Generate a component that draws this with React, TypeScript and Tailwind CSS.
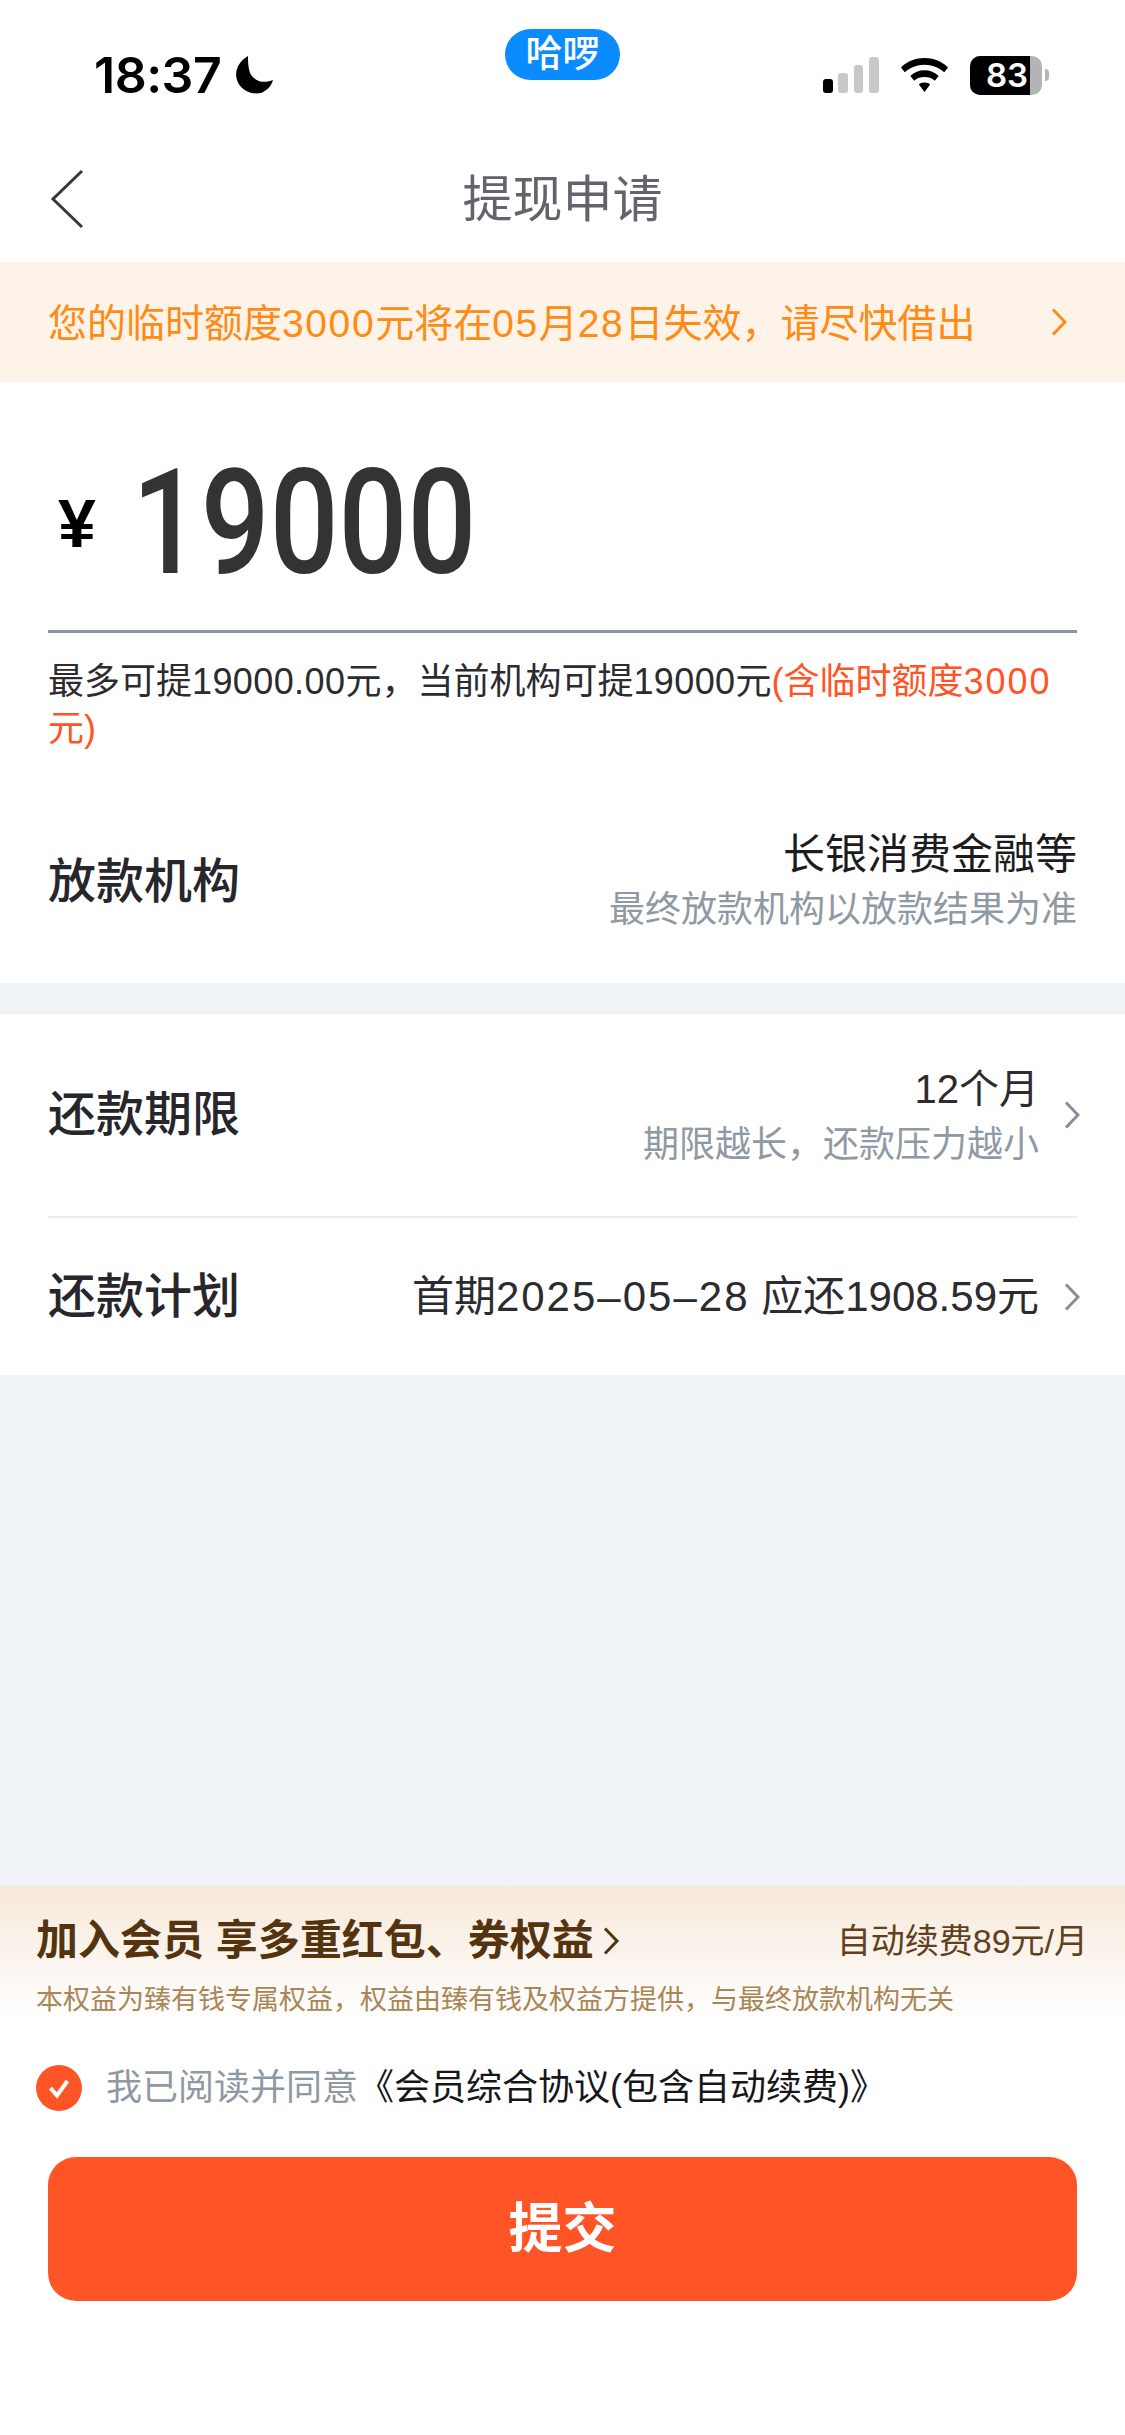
import React from "react";

const Chevron = ({ className }: { className: string }) => (
  <svg className={className} viewBox="0 0 16 28" fill="none">
    <path d="M2 1.5l12 12.5L2 26.5" stroke="currentColor" strokeWidth="3" />
  </svg>
);

function StatusBar() {
  return (
    <div className="relative flex h-[110px] items-center justify-between pl-[94px] pr-[76px] pt-[40px]">
      <div className="flex items-center gap-[14px]">
        <span className="font-['Inter',sans-serif] text-[50px] leading-none font-semibold tracking-[-0.5px] text-black">18:37</span>
        <svg className="h-[38px] w-[38px]" viewBox="0 0 38 38">
          <path d="M13 0C4 5-1 15 2 24c3 10 14 15 24 13 5-2 10-6 12-13-10 4-19 1-23-7-2-6-2-12-2-17z" fill="#000" />
        </svg>
      </div>
      <div className="absolute left-[505px] top-[29px] flex h-[51px] w-[115px] items-center justify-center rounded-full bg-[#0a8cff] text-[37px] leading-none font-medium text-white">
        哈啰
      </div>
      <div className="flex items-center">
        <svg className="h-[36px] w-[56px]" viewBox="0 0 56 36">
          <rect x="0" y="22" width="10" height="14" rx="3" fill="#000" />
          <rect x="15" y="16" width="10" height="20" rx="3" fill="#c8c8c8" />
          <rect x="31" y="8" width="9" height="28" rx="3" fill="#c8c8c8" />
          <rect x="46" y="0" width="10" height="36" rx="3" fill="#c8c8c8" />
        </svg>
        <svg className="ml-[22px] h-[36px] w-[47px]" viewBox="0 0 50 36">
          <path d="M25 0c9 0 18 3 25 10l-4 5c-6-5-13-8-21-8S10 10 4 15L0 10C7 3 16 0 25 0z" fill="#000" />
          <path d="M25 13c6 0 11 2 15 6l-4 5c-3-3-7-4-11-4s-8 1-11 4l-4-5c4-4 9-6 15-6z" fill="#000" />
          <path d="M25 26c3 0 5 1 6 2l-6 8-6-8c1-1 3-2 6-2z" fill="#000" />
        </svg>
        <div className="ml-[22px] flex items-center">
          <div className="flex h-[39px] w-[72px] rounded-[10px] bg-[#b4b4b4]">
            <div className="flex h-full w-[60px] items-center justify-end rounded-l-[10px] bg-black pr-[2px] font-['Inter',sans-serif] text-[33px] leading-none font-semibold text-white">
              83
            </div>
          </div>
          <div className="ml-[3px] h-[12px] w-[4px] rounded-r-full bg-[#b4b4b4]" />
        </div>
      </div>
    </div>
  );
}

function Row({ title, height, children, chevron }: { title: string; height: string; children: React.ReactNode; chevron?: boolean }) {
  return (
    <div className={`flex items-center justify-between ${height}`}>
      <span className="text-[48px] leading-none font-medium text-[#26262b]">{title}</span>
      <div className="flex items-center">
        <div className="text-right">{children}</div>
        {chevron && <Chevron className="ml-[25px] -mr-[3px] h-[28px] w-[16px] text-[#858f99]" />}
      </div>
    </div>
  );
}

export default function App() {
  return (
    <div lang="zh-CN" className="flex h-[2435px] w-[1125px] flex-col bg-white font-['Liberation_Sans','Noto_Sans_CJK_SC',sans-serif]">
      <StatusBar />

      <div className="relative flex h-[152px] items-center justify-center pt-[28px]">
        <svg className="absolute left-[50px] top-[59px] h-[60px] w-[34px]" viewBox="0 0 34 60" fill="none">
          <path d="M32 2L3 30l29 28" stroke="#3b3733" strokeWidth="3" />
        </svg>
        <span className="text-[50px] leading-none text-[#63636e]">提现申请</span>
      </div>

      <div className="flex h-[120px] items-center justify-between bg-[#fdf3e8] pl-[48px] pr-[58px]">
        <span className="pt-[3px] text-[39px] leading-none text-[#ff8a14]">
          您的临时额度<span className="tracking-[1.6px]">3000</span>元将在<span className="tracking-[1.6px]">05</span>月<span className="tracking-[1.6px]">28</span>日失效，请尽快借出
        </span>
        <Chevron className="h-[28px] w-[16px] text-[#ff8a14]" />
      </div>

      <div className="px-[48px]">
        <div className="flex h-[251px] items-center border-b-[3px] border-[#8a949e] pt-[36px]">
          <span className="ml-[10px] -mt-[2px] text-[68px] leading-none font-bold text-black">¥</span>
          <span className="ml-[36px] inline-block origin-left scale-x-[0.83] font-['Roboto',sans-serif] text-[146px] leading-none font-medium text-[#333336]">19000</span>
        </div>
        <p className="pt-[25px] text-[36px] leading-[47px] text-[#2b2b30]">
          最多可提<span className="tracking-[0.4px]">19000.00</span>元，当前机构可提<span className="tracking-[0.4px]">19000</span>元<span className="text-[#ff5526]">(含临时额度<span className="tracking-[2px]">3000</span>元)</span>
        </p>
        <div className="mt-[28px]">
          <Row title="放款机构" height="h-[203px]">
            <div className="text-[42px] leading-[53px] text-[#1c1c20]">长银消费金融等</div>
            <div className="pt-[2px] text-[36px] leading-[53px] text-[#8f99a3]">最终放款机构以放款结果为准</div>
          </Row>
        </div>
      </div>

      <div className="h-[31px] bg-[#eff3f6]" />

      <div className="px-[48px]">
        <div className="border-b-2 border-[#ececf2]">
          <Row title="还款期限" height="h-[202px]" chevron>
            <div className="pt-[3px] text-[40px] leading-[55px] text-[#2b2b30]">12个月</div>
            <div className="text-[36px] leading-[55px] text-[#8f99a3]">期限越长，还款压力越小</div>
          </Row>
        </div>
        <Row title="还款计划" height="h-[157px]" chevron>
          <div className="text-[42px] leading-none text-[#2b2b30]">
            首期<span className="tracking-[2px]">2025–05–28</span> 应还1908.59元
          </div>
        </Row>
      </div>

      <div className="flex-1 bg-[#eff3f6]" />

      <div className="flex h-[134px] flex-col bg-gradient-to-b from-[#f6e8d9] to-white pl-[36px] pr-[37px] pt-[33px]">
        <div className="flex items-center justify-between">
          <div className="flex items-center gap-[8px]">
            <span className="text-[42px] leading-[44px] font-bold text-[#54340f]">加入会员 享多重红包、券权益</span>
            <Chevron className="h-[28px] w-[18px] text-[#54340f]" />
          </div>
          <span className="text-[34px] leading-[44px] text-[#5f4020]">自动续费89元/月</span>
        </div>
        <div className="mt-[20px] text-[27px] leading-[34px] text-[#a98656]">本权益为臻有钱专属权益，权益由臻有钱及权益方提供，与最终放款机构无关</div>
      </div>

      <div className="flex h-[137px] items-center pb-[2px] pl-[36px]">
        <svg className="h-[46px] w-[46px]" viewBox="0 0 46 46">
          <circle cx="23" cy="23" r="23" fill="#ff5526" />
          <path d="M14.5 23l6.5 7.5L31.5 16" fill="none" stroke="#fff" strokeWidth="4" />
        </svg>
        <span className="ml-[24px] text-[36px] leading-none text-[#8f99a3]">我已阅读并同意</span>
        <span className="text-[36px] leading-none text-[#17171a]">《会员综合协议(包含自动续费)》</span>
      </div>

      <div className="px-[48px] pb-[134px]">
        <div className="flex h-[144px] items-center justify-center rounded-[28px] bg-[#ff5526] text-[54px] leading-none font-bold text-white">
          提交
        </div>
      </div>
    </div>
  );
}
